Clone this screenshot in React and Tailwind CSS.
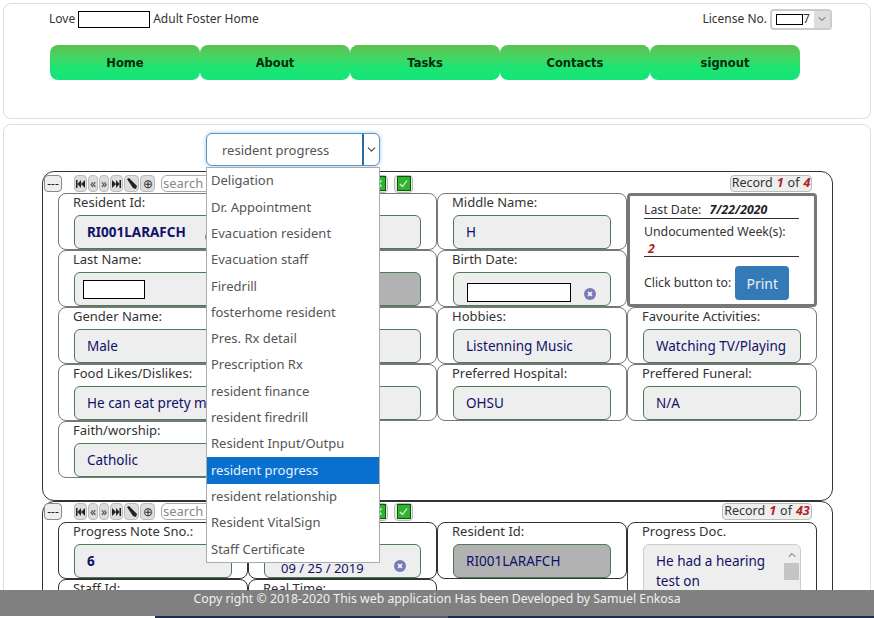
import { ChevronDown, ChevronUp } from 'lucide-react';

const font = { fontFamily: '"Noto Sans", sans-serif' };
const navFont = { fontFamily: '"DejaVu Sans", sans-serif' };

const navItems = ['Home', 'About', 'Tasks', 'Contacts', 'signout'];

const menuItems = [
  'Deligation',
  'Dr. Appointment',
  'Evacuation resident',
  'Evacuation staff',
  'Firedrill',
  'fosterhome resident',
  'Pres. Rx detail',
  'Prescription Rx',
  'resident finance',
  'resident firedrill',
  'Resident Input/Outpu',
  'resident progress',
  'resident relationship',
  'Resident VitalSign',
  'Staff Certificate',
];

function ClearIcon() {
  return (
    <svg width="12" height="12" viewBox="0 0 12 12" className="absolute bottom-[6px] right-[30px]">
      <circle cx="6" cy="6" r="6" fill="#7a7ab8" />
      <path d="M4 4l4 4M8 4l-4 4" stroke="#fff" strokeWidth="1.6" />
    </svg>
  );
}

function ToolButton({ children, className = 'w-[13px]' }) {
  return (
    <div className={`h-[17px] ${className} flex items-center justify-center rounded-[4px] border border-[#bbb] bg-[#dedede] text-[12px] leading-none text-[#333]`}>
      {children}
    </div>
  );
}

function Toolbar({ current, total, recordClass }) {
  return (
    <div className="flex h-[17px] items-center pl-px">
      <div className="flex h-[17px] w-[18px] items-center justify-center rounded-[4px] border border-[#888] bg-[#eee] text-[12px] leading-none text-[#222]">---</div>
      <div className="ml-3 flex items-center gap-px">
        <ToolButton>
          <svg width="9" height="8" viewBox="0 0 9 8"><path d="M0 0h1.500v8H0zM5 0v8L1.500 4zM9 0v8L5 4z" fill="#222" /></svg>
        </ToolButton>
        <ToolButton className="w-[10px]">«</ToolButton>
        <ToolButton className="w-[10px]">»</ToolButton>
        <ToolButton>
          <svg width="9" height="8" viewBox="0 0 9 8"><path d="M9 0H7.500v8H9zM4 0v8l3.500-4zM0 0v8l4-4z" fill="#222" /></svg>
        </ToolButton>
        <ToolButton className="w-[15px]">
          <svg width="11" height="11" viewBox="0 0 11 11"><path d="M1 1l2-1 8 8-1 3-3-1z" fill="#222" /></svg>
        </ToolButton>
        <ToolButton className="w-[15px]">⊕</ToolButton>
      </div>
      <div className="ml-[6px] flex h-[17px] w-[190px] items-center rounded-[6px] border border-[#aaa] pl-px text-[13px] text-[#888]">search</div>
      <div className="ml-[18px] flex h-[18px] w-[19px] items-center justify-center rounded-[4px] border border-[#bbb] bg-[#e8e8e8]">
        <div className="flex h-[15px] w-[14px] items-center justify-center border border-[#145214] bg-[#2db52d]">
          <svg width="9" height="9" viewBox="0 0 9 9"><path d="M1.500 1.500l6 6M7.500 1.500l-6 6" stroke="#dff5df" strokeWidth="1.300" /></svg>
        </div>
      </div>
      <div className="ml-[6px] flex h-[18px] w-[19px] items-center justify-center rounded-[4px] border border-[#bbb] bg-[#e8e8e8]">
        <div className="flex h-[15px] w-[14px] items-center justify-center border border-[#145214] bg-[#2db52d]">
          <svg width="9" height="9" viewBox="0 0 9 9"><path d="M1 5l2.500 2.500L8 1.500" fill="none" stroke="#dff5df" strokeWidth="1.200" /></svg>
        </div>
      </div>
      <div className={`ml-auto mr-[20px] flex h-[17px] ${recordClass} items-center justify-center gap-1 rounded-[4px] border border-[#bbb] bg-[#eee] text-[12.500px] leading-none text-[#333]`}>
        <span>Record</span>
        <span className="font-bold italic text-[#b02020]">{current}</span>
        <span>of</span>
        <span className="font-bold italic text-[#b02020]">{total}</span>
      </div>
    </div>
  );
}

function Cell({ label, children, gray, bold, dark, clear }) {
  return (
    <div className={`relative flex h-[57px] flex-col rounded-lg border ${dark ? 'border-[#333]' : 'border-[#777]'}`}>
      <div className="h-[21px] pl-[14px] text-[13px] leading-[17px] text-[#333]">{label}</div>
      <div className={`mx-[15px] flex h-[34px] items-center rounded-md border border-[#4f7a55] pl-3 pt-px text-[13.500px] text-[#10106a] ${gray ? 'bg-[#b2b2b2]' : 'bg-[#eeeeee]'} ${bold ? 'font-bold' : ''}`}>
        {children}
      </div>
      {clear && <ClearIcon />}
    </div>
  );
}

function SummaryCell() {
  return (
    <div className="row-span-2 flex h-[114px] flex-col rounded border-[3px] border-[#777] pl-[14px] pr-[15px] pt-[6px] text-[12.300px] text-[#333]">
      <div className="flex h-[17px] items-center gap-2 border-b border-[#333] leading-none">
        <span>Last Date:</span>
        <span className="font-bold italic text-[#222]">7/22/2020</span>
      </div>
      <div className="mt-[4px] leading-[17px]">Undocumented Week(s):</div>
      <div className="h-[17px] border-b border-[#333] pl-1 font-bold italic leading-[17px] text-[#b02020]">2</div>
      <div className="mt-[9px] flex items-center gap-[4px]">
        <span>Click button to:</span>
        <div className="flex h-[34px] w-[54px] items-center justify-center rounded bg-[#337ab7] text-[14px] text-[#e8f0f8]">Print</div>
      </div>
    </div>
  );
}

export default function App() {
  return (
    <div className="relative h-screen overflow-hidden bg-white pt-[3px]" style={font}>
      {/* header card */}
      <div className="mx-[3px] h-[116px] rounded-lg border border-[#ddd] pl-[45px] pr-[38px] pt-1">
        <div className="flex h-[22px] items-center text-[12px] text-[#333]">
          <span>Love</span>
          <div className="ml-[3px] h-[17px] w-[72px] border border-black"></div>
          <span className="ml-[3px]">Adult Foster Home</span>
          <span className="ml-auto mr-[3px]">License No.</span>
          <div className="flex h-[21px] w-[62px] items-center rounded border-2 border-[#ccc] pl-1">
            <div className="h-[11px] w-[27px] border border-black"></div>
            <span>7</span>
            <div className="ml-auto flex h-[17px] w-[16px] items-center justify-center bg-[#ddd]">
              <ChevronDown size={12} className="text-[#555]" />
            </div>
          </div>
        </div>
        <div className="ml-px mt-[15px] flex w-[750px]">
          {navItems.map((item) => (
            <div key={item} style={navFont} className="flex h-[35px] flex-1 items-center justify-center rounded-lg bg-gradient-to-b from-[#5cc050] via-[#1ee470] via-60% to-[#14e57a] pt-[3px] text-[11.500px] font-bold text-[#062a0c]">
              {item}
            </div>
          ))}
        </div>
      </div>

      {/* main card */}
      <div className="ml-[3px] mr-[3px] mt-[5px] rounded-t-lg border border-[#ddd] pl-[38px] pr-[37px] pt-2">
        <div className="relative ml-[164px] w-[174px]">
          <div className="flex h-[33px] items-center rounded-md border border-[#5a93c4] bg-white pl-[15px] text-[13px] text-[#555] shadow-[0_0_4px_#9cc4e8]">
            <span className="pt-[3px]">resident progress</span>
            <div className="ml-auto flex h-full w-[17px] items-center justify-center border-l-2 border-[#2a6aa0]">
              <ChevronDown size={13} className="text-[#444]" />
            </div>
          </div>
          {/* open dropdown list */}
          <div className="absolute left-0 top-[34px] z-10 w-[174px] border border-[#aaa] bg-white text-[13px] text-[#555]">
            {menuItems.map((item) => (
              <div key={item} className={`flex h-[26.300px] items-center whitespace-nowrap pl-1 ${item === 'resident progress' ? 'bg-[#0a70d0] text-[#e6f2ff]' : ''}`}>
                {item}
              </div>
            ))}
          </div>
        </div>

        {/* resident panel */}
        <div className="mt-[5px] h-[330px] rounded-xl border-[1.500px] border-[#333] pt-[3px]">
          <Toolbar current="1" total="4" recordClass="w-[82px]" />
          <div className="ml-[15px] mt-px grid w-[759px] grid-cols-[190px_189px_190px_190px]">
            <Cell label="Resident Id:" bold clear>RI001LARAFCH</Cell>
            <Cell></Cell>
            <Cell label="Middle Name:">H</Cell>
            <SummaryCell />
            <Cell label="Last Name:">
              <div className="-ml-1 h-[19px] w-[62px] border border-black bg-white"></div>
            </Cell>
            <Cell gray></Cell>
            <Cell label="Birth Date:" clear>
              <div className="ml-px mt-[5px] h-[19px] w-[104px] border border-black bg-white"></div>
            </Cell>
            <Cell label="Gender Name:">Male</Cell>
            <Cell></Cell>
            <Cell label="Hobbies:">Listenning Music</Cell>
            <Cell label="Favourite Activities:">Watching TV/Playing</Cell>
            <Cell label="Food Likes/Dislikes:">
              <span className="whitespace-nowrap">He can eat prety m</span>
            </Cell>
            <Cell></Cell>
            <Cell label="Preferred Hospital:">OHSU</Cell>
            <Cell label="Preffered Funeral:">N/A</Cell>
            <Cell label="Faith/worship:">Catholic</Cell>
          </div>
        </div>

        {/* progress panel */}
        <div className="rounded-t-xl border-[1.500px] border-[#333] pt-px">
          <Toolbar current="1" total="43" recordClass="w-[90px]" />
          <div className="ml-[15px] mt-[2px] grid w-[759px] grid-cols-[190px_189px_190px_190px]">
            <Cell label="Progress Note Sno.:" bold dark>6</Cell>
            <Cell dark clear><span className="ml-[4px] mt-[14px] whitespace-nowrap text-[13px]">09 / 25 / 2019</span></Cell>
            <Cell label="Resident Id:" gray dark>RI001LARAFCH</Cell>
            <div className="relative row-span-2 h-[114px] rounded-lg border border-[#333]">
              <div className="h-[21px] pl-[14px] text-[13px] leading-[17px] text-[#333]">Progress Doc.</div>
              <div className="mx-[15px] flex h-[80px] rounded-md border border-[#ccc] bg-[#eeeeee] pl-3 text-[13.500px] leading-[20px] text-[#10106a]">
                <span className="w-[122px] pt-[6px]">He had a hearing test on</span>
                <div className="ml-auto flex w-[17px] flex-col items-center">
                  <ChevronUp size={12} className="mt-1 text-[#555]" />
                  <div className="mt-[2px] h-[17px] w-[15px] bg-[#c4c4c4]"></div>
                </div>
              </div>
            </div>
            <Cell label="Staff Id:" dark></Cell>
            <Cell label="Real Time:" dark></Cell>
          </div>
        </div>
      </div>

      {/* footer bar over the page */}
      <div className="absolute inset-x-0 bottom-0 z-20">
        <div className="h-[26px] bg-[#808080] text-center text-[12.300px] leading-[18px] text-[#f0f0f0]">
          Copy right © 2018-2020 This web application Has been Developed by Samuel Enkosa
        </div>
        <div className="flex h-[2px] bg-white">
          <div className="ml-[155px] w-[245px] bg-[#1c2f4a]"></div>
          <div className="w-[48px] bg-[#555a70]"></div>
          <div className="flex-1 bg-[#1c2f4a]"></div>
        </div>
      </div>
    </div>
  );
}
